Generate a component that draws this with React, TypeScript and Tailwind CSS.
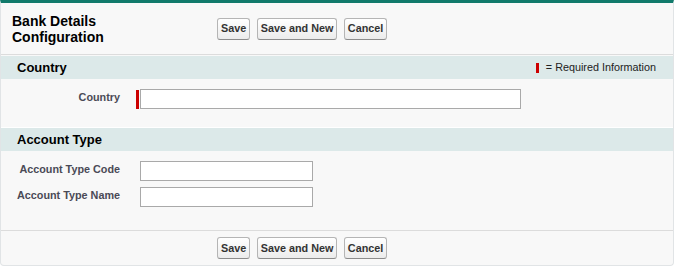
const FONT = "font-['Liberation_Sans',Arial,sans-serif]";

function Btn({ children }: { children: string }) {
  return (
    <button
      type="button"
      className="h-[22px] rounded-[3px] border border-[#b5b5b5] border-b-[#8c8c8c] bg-gradient-to-b from-white to-[#ececec] px-[3px] text-[10.8px] font-bold leading-none text-[#333]"
    >
      {children}
    </button>
  );
}

function ButtonRow() {
  return (
    <div className="flex gap-[6.5px]">
      <Btn>Save</Btn>
      <Btn>Save and New</Btn>
      <Btn>Cancel</Btn>
    </div>
  );
}

function SectionHeader({ title, legend }: { title: string; legend?: boolean }) {
  return (
    <div className="flex h-[23px] items-center justify-between bg-[#dce9e9] pl-[16px] pr-[17px]">
      <h3 className="text-[13px] font-bold text-black">{title}</h3>
      {legend && (
        <div className="flex items-center gap-[7px] text-[10.8px] text-[#222]">
          <span className="block h-[10px] w-[3px] bg-[#c00]" />
          <span>= Required Information</span>
        </div>
      )}
    </div>
  );
}

function Field({
  label,
  width,
  required,
}: {
  label: string;
  width: string;
  required?: boolean;
}) {
  return (
    <div className="flex items-start">
      <label className="w-[119px] pt-[1px] text-right text-[10.8px] font-bold leading-[14px] text-[#4a4a56]">
        {label}
      </label>
      <div className="ml-[16px] flex items-center">
        {required ? (
          <span className="mr-[1px] block h-[19px] w-[3px] bg-[#c00]" />
        ) : (
          <span className="block w-[4px]" />
        )}
        <input
          type="text"
          className={`h-[20px] ${width} border border-[#a9a9a9] bg-white outline-none`}
        />
      </div>
    </div>
  );
}

export default function App() {
  return (
    <div
      className={`${FONT} h-[266px] w-[674px] overflow-hidden rounded-b-[4px] border border-t-[3px] border-[#e1e4e6] border-t-[#117a6b] bg-[#f8f8f8]`}
    >
      {/* Page header */}
      <div className="flex h-[52px] items-center border-b border-[#dcdcdc] pl-[11px]">
        <h2 className="w-[205px] text-[14px] font-bold leading-[16px] text-black">
          Bank Details
          <br />
          Configuration
        </h2>
        <ButtonRow />
      </div>

      {/* Country */}
      <div className="mt-px">
        <SectionHeader title="Country" legend />
        <div className="pb-[18px] pt-[10px]">
          <Field label="Country" width="w-[381px]" required />
        </div>
      </div>

      {/* Account Type */}
      <div className="border-t border-white">
        <SectionHeader title="Account Type" />
        <div className="flex flex-col gap-[6px] pb-[23px] pt-[10px]">
          <Field label="Account Type Code" width="w-[173px]" />
          <Field label="Account Type Name" width="w-[173px]" />
        </div>
      </div>

      {/* Bottom buttons */}
      <div className="flex border-t border-[#dcdcdc] pl-[216px] pt-[6px]">
        <ButtonRow />
      </div>
    </div>
  );
}
